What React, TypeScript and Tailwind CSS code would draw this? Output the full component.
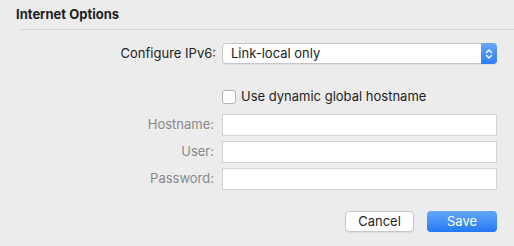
import React from "react";

const font = { fontFamily: "Inter, 'Liberation Sans', sans-serif" };

function Field({ label }: { label: string }) {
  return (
    <div className="flex items-center h-[22px]">
      <div className="w-[215px] pr-[1px] text-right text-[13px] text-[#8a8a8a]">{label}</div>
      <div className="ml-[7px] w-[275px] h-[22px] bg-white border border-[#d4d4d4]" />
    </div>
  );
}

export default function App() {
  return (
    <div className="w-[514px] h-[246px] bg-[#ececec] text-[#222] overflow-hidden" style={font}>
      <div className="pl-4 pt-[5px] h-[29px] text-[13px] font-bold text-[#1e1e1e]">Internet Options</div>
      <div className="ml-[19px] h-px bg-[#d8d8d8]" />

      <div className="mt-[13px] flex items-center h-[21px]">
        <div className="w-[217px] pr-[1px] text-right text-[13px] text-[#1e1e1e]">Configure IPv6:</div>
        <div className="ml-[5px] w-[275px] h-[21px] flex bg-white border border-[#c6c6c6] rounded-[4px] shadow-[0_1px_0_rgba(0,0,0,0.05)]">
          <div className="flex-1 pl-[8px] text-[13px] leading-[19px] text-[#1e1e1e]">Link-local only</div>
          <div className="w-[16px] -my-px -mr-px rounded-r-[4px] bg-gradient-to-b from-[#65a9fa] to-[#2d7ef5] flex items-center justify-center">
            <svg width="8" height="12" viewBox="0 0 8 12" fill="none" stroke="white" strokeWidth="1.4" strokeLinecap="round" strokeLinejoin="round">
              <path d="M1.5 4.5 L4 2 L6.5 4.5" />
              <path d="M1.5 7.5 L4 10 L6.5 7.5" />
            </svg>
          </div>
        </div>
      </div>

      <div className="mt-[26px] flex items-center h-[14px]">
        <div className="ml-[222px] w-[14px] h-[14px] bg-white border border-[#b4b4b4] rounded-[3px]" />
        <div className="ml-[5px] text-[13px] text-[#1e1e1e]">Use dynamic global hostname</div>
      </div>

      <div className="mt-[10px] flex flex-col gap-[5px]">
        <Field label="Hostname:" />
        <Field label="User:" />
        <Field label="Password:" />
      </div>

      <div className="mt-[21px] flex justify-end gap-[13px] pr-[17px]">
        <div className="w-[69px] h-[21px] bg-white border border-[#c6c6c6] rounded-[4px] text-[13px] leading-[19px] text-center text-[#1e1e1e] shadow-[0_1px_0_rgba(0,0,0,0.06)]">Cancel</div>
        <div className="w-[70px] h-[21px] rounded-[4px] bg-gradient-to-b from-[#62a7fb] to-[#2278f3] text-[13px] leading-[21px] text-center text-white">Save</div>
      </div>
    </div>
  );
}
